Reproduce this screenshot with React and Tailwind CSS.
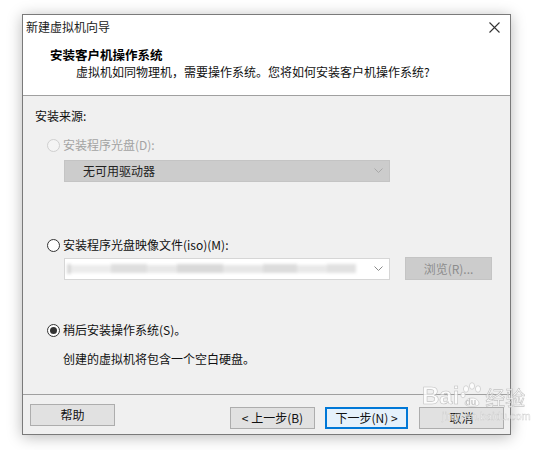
import React from "react";

const font = "font-['Noto_Sans_CJK_SC','Microsoft_YaHei',sans-serif]";

const Radio = ({ state }) => {
  if (state === "disabled")
    return <span className="w-[13px] h-[13px] rounded-full border border-[#cfcfcf] bg-[#f4f4f4] shrink-0" />;
  return (
    <span className="w-[13px] h-[13px] rounded-full border border-[#333] bg-white shrink-0 flex items-center justify-center">
      {state === "checked" && <span className="w-[7px] h-[7px] rounded-full bg-[#333]" />}
    </span>
  );
};

const Chevron = ({ color = "#9a9a9a" }) => (
  <svg width="9" height="6" viewBox="0 0 9 6">
    <path d="M0.5 0.5 L4.5 4.5 L8.5 0.5" fill="none" stroke={color} strokeWidth="1" />
  </svg>
);

const Btn = ({ children, primary, w = "w-[85px]" }) => (
  <button
    className={`${w} h-[22px] text-[12px] leading-none text-[#111] ${
      primary ? "border-2 border-[#0078d7] bg-[#e5f1fb]" : "border border-[#adadad] bg-[#e1e1e1]"
    }`}
  >
    {children}
  </button>
);

export default function App() {
  return (
    <div className={`relative w-[554px] h-[450px] bg-white pl-[22px] pt-[14px] ${font}`}>
      {/* window */}
      <div className="w-[489px] h-[421px] border border-[#7a7a7a] flex flex-col shadow-[0_2px_14px_rgba(0,0,0,0.28)]">
        {/* header */}
        <div className="h-[80px] bg-white border-b border-[#a0a0a0] box-content">
          <div className="h-[24px] flex items-center justify-between pl-[3px] pr-[10px]">
            <span className="text-[12px] text-[#222]">新建虚拟机向导</span>
            <svg width="11" height="11" viewBox="0 0 11 11">
              <path d="M0.5 0.5 L10.5 10.5 M10.5 0.5 L0.5 10.5" stroke="#333" strokeWidth="1.1" />
            </svg>
          </div>
          <div className="mt-[7px] pl-[27px] text-[12.5px] leading-[17px] font-bold text-black">安装客户机操作系统</div>
          <div className="pl-[53px] text-[12px] leading-[17px] text-[#111]">
            虚拟机如同物理机，需要操作系统。您将如何安装客户机操作系统?
          </div>
        </div>

        {/* body */}
        <div className="h-[286px] bg-[#f0f0f0] pl-[12px] pt-[12px] border-b border-[#a0a0a0] box-content">
          <div className="text-[12px] leading-[16px] text-[#111]">安装来源:</div>

          <div className="mt-[13px] pl-[12px] h-[16px] flex items-center gap-[3px]">
            <Radio state="disabled" />
            <span className="text-[12px] text-[#a3a3a3]">安装程序光盘(D):</span>
          </div>
          <div className="mt-[7px] ml-[29px] w-[326px] h-[22px] bg-[#cccccc] border border-[#c4c4c4] flex items-center justify-between pl-[18px] pr-[6px]">
            <span className="text-[12px] text-[#222]">无可用驱动器</span>
            <Chevron color="#a8a8a8" />
          </div>

          <div className="mt-[55px] pl-[12px] h-[16px] flex items-center gap-[3px]">
            <Radio />
            <span className="text-[12px] text-[#111]">安装程序光盘映像文件(iso)(M):</span>
          </div>
          <div className="mt-[4px] ml-[29px] flex items-center gap-[15px]">
            <div className="w-[326px] h-[22px] bg-white border border-[#d6d6d6] flex items-center justify-between pr-[6px] overflow-hidden">
              <div className="flex-1 h-full flex items-center blur-[1.5px] pl-[2px] pr-[18px]">
                <div className="w-[4px] h-[10px] bg-[#d8d8d8]" />
                <div className="w-[40px] h-[8px] bg-[#ececec]" />
                <div className="w-[36px] h-[9px] bg-[#dedede]" />
                <div className="w-[30px] h-[8px] bg-[#e8e8e8]" />
                <div className="w-[46px] h-[9px] bg-[#d9d9d9]" />
                <div className="w-[40px] h-[8px] bg-[#e6e6e6]" />
                <div className="w-[34px] h-[9px] bg-[#dcdcdc]" />
                <div className="w-[30px] h-[8px] bg-[#e9e9e9]" />
                <div className="flex-1 h-[9px] bg-[#e1e1e1]" />
              </div>
              <Chevron color="#8a8a8a" />
            </div>
            <div className="w-[87px] h-[23px] bg-[#cccccc] border border-[#c4c4c4] flex items-center justify-center text-[12px] text-[#8c8c8c]">
              浏览(R)...
            </div>
          </div>

          <div className="mt-[42px] pl-[12px] h-[16px] flex items-center gap-[3px]">
            <Radio state="checked" />
            <span className="text-[12px] text-[#111]">稍后安装操作系统(S)。</span>
          </div>
          <div className="mt-[13px] pl-[28px] text-[12px] leading-[16px] text-[#111]">创建的虚拟机将包含一个空白硬盘。</div>
        </div>

        {/* footer */}
        <div className="flex-1 bg-[#f0f0f0] flex items-start pt-[9px] pl-[7px]">
          <Btn>帮助</Btn>
          <div className="ml-[115px]">
            <Btn>&lt; 上一步(B)</Btn>
          </div>
          <div className="ml-[10px]">
            <Btn primary w="w-[83px]">下一步(N) &gt;</Btn>
          </div>
          <div className="ml-[11px]">
            <Btn>取消</Btn>
          </div>
        </div>
      </div>

      {/* watermark */}
      <div className="absolute left-[422px] top-[382px] w-[110px] h-[60px] pointer-events-none opacity-80">
        <div className="flex items-end">
          <span className="text-[24px] leading-none font-bold text-white [-webkit-text-stroke:0.6px_#b5b5b5] font-['Liberation_Sans',sans-serif]">Bai</span>
          <span className="relative w-[24px] h-[26px] mx-[1px]">
            <svg width="24" height="26" viewBox="0 0 24 26" className="absolute left-0 top-0">
              <g fill="white" stroke="#bdbdbd" strokeWidth="0.7">
                <ellipse cx="6" cy="7" rx="2.6" ry="3.3" />
                <ellipse cx="12" cy="4" rx="2.6" ry="3.3" />
                <ellipse cx="18" cy="7" rx="2.6" ry="3.3" />
                <ellipse cx="3" cy="13" rx="2.2" ry="2.8" />
                <path d="M5 22 C5 14 19 14 19 22 C19 25 5 25 5 22 Z" />
              </g>
            </svg>
            <span className="absolute left-[5px] top-[14px] text-[9px] font-bold text-[#bdbdbd] font-['Liberation_Sans',sans-serif]">du</span>
          </span>
          <span className="text-[20px] leading-none text-white [-webkit-text-stroke:0.6px_#b5b5b5]">经验</span>
        </div>
        <div className="mt-[3px] ml-[20px] text-[11px] leading-none text-white [-webkit-text-stroke:0.4px_#c4c4c4] font-['Liberation_Sans',sans-serif]">
          jingyan.baidu.com
        </div>
      </div>
    </div>
  );
}
